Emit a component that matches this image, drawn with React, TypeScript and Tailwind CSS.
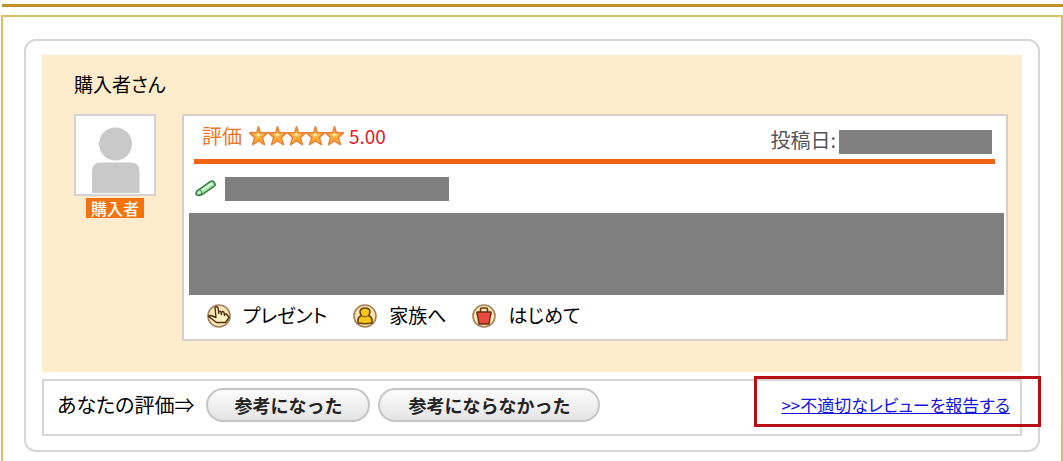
import React from 'react';

const Star: React.FC = () => (
  <svg width="19" height="20" viewBox="0 0 19 20" aria-hidden="true">
    <path
      d="M9.5 0.8 L11.2 6.6 L18.4 6.8 L13.4 11.4 L15.4 18.6 L9.5 14.8 L3.6 18.6 L5.6 11.4 L0.6 6.8 L7.8 6.6 Z"
      fill="#fdb13c"
      stroke="#e88238"
      strokeWidth="1.6"
      strokeLinejoin="round"
    />
    <path d="M9 6 L10.4 8.4 L14 8.6 L9 10.5 L5.5 8.6 L8.2 8.4 Z" fill="#ffe59a" />
    <path d="M6.6 14.6 L9.5 12 L12.4 14.6 L9.5 13.4 Z" fill="#ff941a" />
  </svg>
);

const Pencil: React.FC = () => (
  <svg width="22" height="20" viewBox="0 0 22 20" className="shrink-0" aria-hidden="true">
    <path
      d="M1.8 12.2 L15.2 2.6 Q17 1.6 18.4 2.4 L20 4.8 Q20.6 6.2 19.4 7.2 L7 15.6 L3 16.4 Q0.8 16 1 14.4 Z"
      fill="#a6e8ac"
      stroke="#3c7d43"
      strokeWidth="1.6"
      strokeLinejoin="round"
    />
    <path d="M4.6 10.6 Q7.4 12 7 15.2" fill="none" stroke="#3c7d43" strokeWidth="1" />
    <path d="M7.6 10.8 L16.6 4.6" stroke="#d6f8d8" strokeWidth="2" />
    <circle cx="3.8" cy="14" r="1.1" fill="#e8ffe8" />
  </svg>
);

const Avatar: React.FC = () => (
  <svg width="78" height="78" viewBox="0 0 78 78" role="img" aria-label="購入者">
    <circle cx="39.5" cy="28" r="16.5" fill="#c9c9c9" />
    <path d="M16 77 V55 Q16 46.5 25 46.5 H55 Q63.5 46.5 63.5 55 V77 Z" fill="#c9c9c9" />
  </svg>
);

const Badge: React.FC<{ children: React.ReactNode }> = ({ children }) => (
  <svg width="24" height="24" viewBox="0 0 24 24" className="shrink-0" aria-hidden="true">
    <circle cx="12" cy="12" r="11" fill="#fbe6b4" stroke="#a5815a" strokeWidth="1.6" />
    {children}
  </svg>
);

const HandIcon: React.FC = () => (
  <Badge>
    <path
      d="M1.5 12 L4 11.5 L9 13.5 L8 3.5 Q9.5 2 11 3.5 L11.8 9.5 V7.5 Q13 6.5 14 8 L14.5 10.5 V8 Q16 7 17 8.5 L17.5 11.5 Q18 9.5 19.500 10 L22 13.500 L18.5 18.5 H9.5 L3 13.5 Z"
      fill="#fff0c4"
      stroke="#51300f"
      strokeWidth="1.4"
      strokeLinejoin="round"
    />
  </Badge>
);

const PersonIcon: React.FC = () => (
  <Badge>
    <path
      d="M8.5 11.5 Q7 10 7 7.5 Q7.5 4 12 4 Q16.5 4 17 7.5 Q17 10 15.5 11.5 Q19 13 19 16 V19 Q12 20.5 5 19 V16 Q5 13 8.5 11.5 Z"
      fill="#f6c51d"
      stroke="#6b4306"
      strokeWidth="1.6"
      strokeLinejoin="round"
    />
    <path d="M9 12 Q12 13.5 15 12" fill="none" stroke="#8a5a08" strokeWidth="1.2" />
  </Badge>
);

const BagIcon: React.FC = () => (
  <Badge>
    <path d="M8.5 9 V5.5 Q8.5 4 10 4 H14 Q15.5 4 15.5 5.5 V9" fill="none" stroke="#6b3410" strokeWidth="1.6" />
    <path
      d="M5 8 H19 V10.500 H18.500 L17 20 H7 L5.500 10.500 H5 Z"
      fill="#ea4a41"
      stroke="#6b2a12"
      strokeWidth="1.4"
      strokeLinejoin="round"
    />
  </Badge>
);

const tags = [
  { label: 'プレゼント', icon: <HandIcon /> },
  { label: '家族へ', icon: <PersonIcon /> },
  { label: 'はじめて', icon: <BagIcon /> },
];

const buttonClass =
  "h-[34px] rounded-full border-2 border-[#c6c6c6] bg-linear-to-b from-[#fcfcfc] via-[#f0f0f0] to-[#e4e4e4] text-[18px] leading-none font-bold text-[#222222] [font-feature-settings:normal]";

const App: React.FC = () => {
  return (
    <div
      lang="ja"
      className="bg-white pt-1 font-['Noto_Sans_CJK_JP','Liberation_Sans',sans-serif] text-[19px] leading-7 text-black [font-feature-settings:'palt']"
    >
      <div className="ml-0.5 h-[3px] bg-[#c2912c]" />
      <main className="mt-2 ml-px border-2 border-b-0 border-[#dfbd66] px-[21px] pt-[22px] pb-[9px]">
        <article className="rounded-xl border-2 border-[#d6d6d6] px-4 py-[14px]">
          <section className="bg-[#feeccd] pt-[15px] pr-[14px] pb-[31px] pl-8">
            <h2>購入者さん</h2>

            <div className="mt-4 flex items-start gap-[26px]">
              <div className="flex w-[82px] shrink-0 flex-col items-center">
                <div className="border-2 border-[#d3d3d3] bg-white">
                  <Avatar />
                </div>
                <span className="mt-0.5 bg-[#f5720e] px-[5px] text-[16px] leading-5 font-medium text-white">購入者</span>
              </div>

              <div className="min-w-0 flex-1 border-2 border-[#d6d0c8] bg-white">
                <div className="mr-[11px] ml-[10px] flex h-12 justify-between border-b-[5px] border-[#ec6414] pr-[3px] pl-2">
                  <div className="flex h-10 items-center text-[#e9752a]">
                    <span className="text-[20px]">評価</span>
                    <span className="ml-[7px] flex" role="img" aria-label="5つ星">
                      <Star />
                      <Star />
                      <Star />
                      <Star />
                      <Star />
                    </span>
                    <span className="ml-[5px] text-[#e0202c]">5.00</span>
                  </div>
                  <div className="flex items-start gap-[3px] self-end pb-[5px] text-[20px] leading-5 text-[#555555]">
                    <span>投稿日:</span>
                    <div className="h-6 w-[153px] bg-[#808080]" />
                  </div>
                </div>

                <div className="flex items-center gap-2 pt-[13px] pb-3 pl-[11px]">
                  <Pencil />
                  <div className="h-6 w-56 bg-[#808080]" />
                </div>

                <div className="mr-0.5 ml-[5px] h-[82px] bg-[#808080]" />

                <ul className="flex h-11 items-center gap-[26px] pb-0.5 pl-[23px]">
                  {tags.map((tag) => (
                    <li key={tag.label} className="flex items-center gap-3">
                      {tag.icon}
                      <span className="pb-0.5">{tag.label}</span>
                    </li>
                  ))}
                </ul>
              </div>
            </div>
          </section>

          <section className="relative mt-[7px] flex items-center border-2 border-[#d6d6d6] pt-[7px] pr-[10px] pb-3 pl-[13px]">
            <span className="text-[20px]">あなたの評価⇒</span>
            <button type="button" className={`ml-3 w-[164px] ${buttonClass}`}>
              参考になった
            </button>
            <button type="button" className={`ml-2 w-[222px] ${buttonClass}`}>
              参考にならなかった
            </button>
            <a href="#report" className="ml-auto text-[17px] text-[#1414dc] underline">
              &gt;&gt;不適切なレビューを報告する
            </a>
            <div className="pointer-events-none absolute -top-[5px] -right-[21px] h-[51px] w-[287px] border-[3px] border-[#b80f14]" />
          </section>
        </article>
      </main>
    </div>
  );
};

export default App;
